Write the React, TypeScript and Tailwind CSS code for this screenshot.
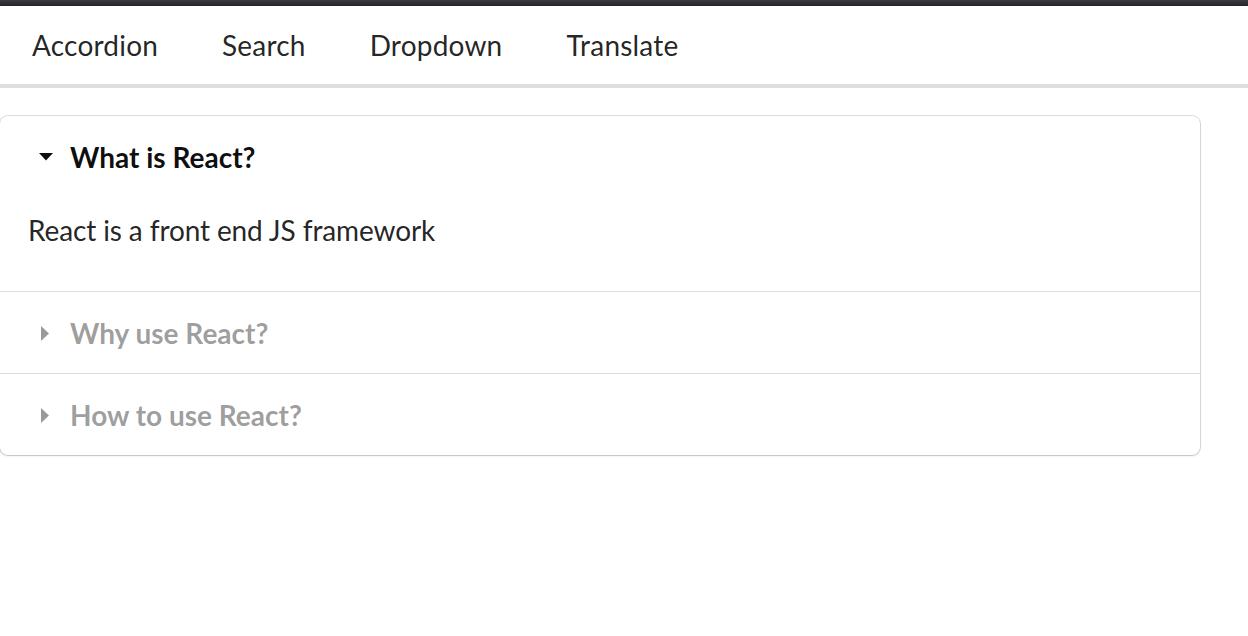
import { useState } from 'react';

const items = [
  { title: 'What is React?', content: 'React is a front end JS framework' },
  { title: 'Why use React?', content: 'React is a favorite JS library among engineers' },
  { title: 'How to use React?', content: 'You use React by creating components' },
];

const tabs = ['Accordion', 'Search', 'Dropdown', 'Translate'];

function Caret({ open }: { open: boolean }) {
  return (
    <span className="w-[35px] mr-[7px] flex items-center justify-center shrink-0">
      {open ? (
        <svg width="14" height="8" viewBox="0 0 14 8">
          <path d="M0 0h14L7 7.5z" fill="currentColor" />
        </svg>
      ) : (
        <svg width="8" height="15" viewBox="0 0 8 15" className="-ml-[2px]">
          <path d="M0 0v15l8-7.5z" fill="currentColor" />
        </svg>
      )}
    </span>
  );
}

export default function App() {
  const [activeIndex, setActiveIndex] = useState(0);

  return (
    <div className="min-h-screen bg-white font-['Lato',sans-serif] text-[rgba(0,0,0,0.87)]">
      {/* window top strip */}
      <div className="h-[6px] bg-gradient-to-b from-[#3c3d41] to-[#222326]" />

      {/* Header menu */}
      <div className="flex border-b-4 border-[#dedede]">
        {tabs.map((tab) => (
          <a key={tab} href="#" className="px-[32px] pt-[25px] pb-[25px] text-[28px] leading-[28px] tracking-[0.2px]">
            {tab}
          </a>
        ))}
      </div>

      {/* Styled accordion */}
      <div className="mt-[28px] w-[1200px] rounded-[8px] bg-white shadow-[0_1px_2px_0_rgba(34,36,38,0.15),0_0_0_1px_rgba(34,36,38,0.15)]">
        {items.map((item, index) => {
          const open = index === activeIndex;
          return (
            <div key={item.title} className={index > 0 ? 'border-t border-[#dedede]' : ''}>
              <div
                onClick={() => setActiveIndex(index)}
                className={`flex items-center px-[28px] pt-[21px] pb-[20px] text-[28px] leading-[40px] font-bold cursor-pointer ${
                  open ? 'text-[rgba(0,0,0,0.95)]' : 'text-[rgba(0,0,0,0.4)]'
                }`}
              >
                <Caret open={open} />
                {item.title}
              </div>
              {open && (
                <div className="px-[28px] pt-[13px] pb-[41px] text-[28px] leading-[40px] tracking-[-0.12px]">
                  <p>{item.content}</p>
                </div>
              )}
            </div>
          );
        })}
      </div>
    </div>
  );
}
